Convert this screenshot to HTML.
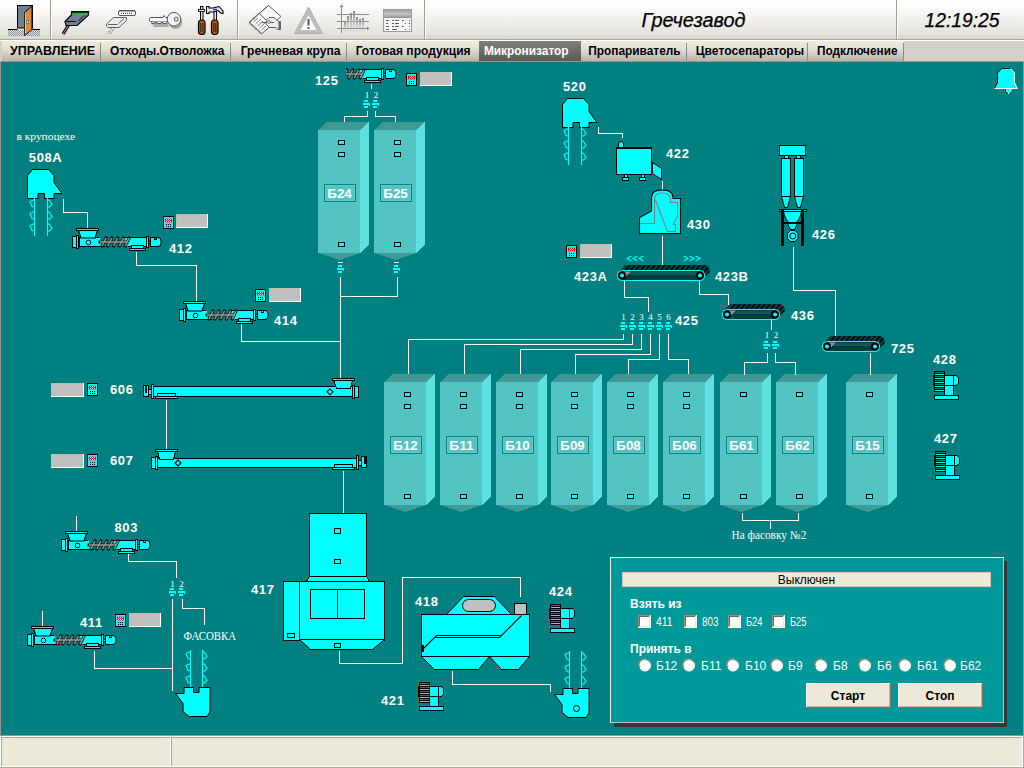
<!DOCTYPE html>
<html><head><meta charset="utf-8"><style>
html,body{margin:0;padding:0;width:1024px;height:768px;overflow:hidden;background:#d4d0c8;font-family:"Liberation Sans",sans-serif;}
#tb{position:absolute;left:0;top:0;width:1024px;height:39px;background:linear-gradient(#fdfdfc,#ffffff 10%,#e6e3dc 85%,#d9d5cc);}
.sep{position:absolute;top:0;width:1px;height:39px;background:#a09e8c;border-right:1px solid #fff;}
#tbline{position:absolute;left:0;top:39px;width:1024px;height:1px;background:#aaa896;}
#tbw{position:absolute;left:0;top:40px;width:1024px;height:1px;background:#fff;}
#tabs{position:absolute;left:0;top:41px;width:1024px;height:21px;background:#d4d0c8;}
.tab{position:absolute;top:0;height:20px;background:linear-gradient(#f0ecde,#e2dfd4 40%,#b6b4aa);font-weight:bold;font-size:12px;line-height:20px;text-align:center;color:#000;box-sizing:border-box;white-space:nowrap;}
.tab.act{background:linear-gradient(#82807a,#6e6c66 50%,#5c5a54);color:#fff;}
#status{position:absolute;left:0;top:735px;width:1024px;height:33px;background:#ece9d8;border-top:1px solid #fff;box-sizing:border-box;}
</style></head><body>
<div id="tb"></div><div class="sep" style="left:50px"></div><div class="sep" style="left:237px"></div><div class="sep" style="left:424px"></div><div class="sep" style="left:896px"></div><div id="tbline"></div><div id="tbw"></div><div id="tabs"><div class="tab" style="left:2px;width:99px"></div><div class="tab" style="left:101px;width:130px"></div><div class="tab" style="left:231px;width:116px"></div><div class="tab" style="left:347px;width:132px"></div><div class="tab act" style="left:479px;width:102px"></div><div class="tab" style="left:581px;width:106px"></div><div class="tab" style="left:687px;width:121px"></div><div class="tab" style="left:808px;width:96px"></div></div><svg width="1024" height="768" style="position:absolute;left:0;top:0" shape-rendering="crispEdges"><rect x="0" y="62" width="1024" height="673" fill="#008080" /><rect x="0" y="61" width="1024" height="1" fill="#9c948c" /><rect x="0" y="62" width="1" height="673" fill="#9c948c" /><rect x="1023" y="62" width="1" height="673" fill="#9c948c" /><text x="16.5" y="140.3" font-family="Liberation Serif" font-size="11" font-weight="normal" fill="#fff" text-anchor="start" textLength="58.5" lengthAdjust="spacingAndGlyphs">в крупоцехе</text><text x="28.8" y="162" font-family="Liberation Sans" font-size="13" font-weight="bold" fill="#fff" text-anchor="start" letter-spacing="0.6">508A</text><polygon points="32.5,169.5 48.5,169.5 54.0,175.5 54.0,182.5 62.0,193.5 54.0,193.5 54.0,198.5 44.5,198.5 44.5,193.5 38.0,193.5 38.0,198.5 27.5,198.5 27.5,175.5" fill="#00ffff" stroke="#000" stroke-width="1" shape-rendering="auto"/><path d="M34.5 198V236M47.5 198V236M34.5 199.5L30 201.5L32 206.5L34.5 207.0M47.5 199.5L49.5 200.5L52 204.5L49.5 207.0L47.5 207.0M34.5 211.5L30 213.5L32 218.5L34.5 219.0M47.5 211.5L49.5 212.5L52 216.5L49.5 219.0L47.5 219.0M34.5 223.5L30 225.5L32 230.5L34.5 231.0M47.5 223.5L49.5 224.5L52 228.5L49.5 231.0L47.5 231.0" fill="none" stroke="#00ffff" stroke-width="1.1" shape-rendering="auto"/><polyline points="63.5,198.5 63.5,212.5 87.5,212.5 87.5,228.5" fill="none" stroke="#fff" stroke-width="1"/><rect x="79.5" y="237.5" width="68" height="9" fill="#00ffff" stroke="#000" /><polygon points="99,237 122,237 128,247 105,247" fill="#008080" /><path d="M100 242H127M102.0 246L106.0 238M107.8 246L111.8 238M113.6 246L117.6 238M119.4 246L123.4 238M125.2 246L129.2 238" fill="none" stroke="#181818" stroke-width="3" stroke-linecap="square" shape-rendering="auto"/><path d="M100 242H127M102.0 246L106.0 238M107.8 246L111.8 238M113.6 246L117.6 238M119.4 246L123.4 238M125.2 246L129.2 238" fill="none" stroke="#9a9a9a" stroke-width="1.4" shape-rendering="auto"/><rect x="72.5" y="236.5" width="4" height="11" fill="#00ffff" stroke="#000" /><rect x="76.5" y="235.5" width="2" height="13" fill="#00ffff" stroke="#000" /><path d="M78.5 230.5H97.5L95 238H81Z" fill="#00ffff" stroke="#000" stroke-width="1.15" shape-rendering="auto"/><rect x="76.5" y="228.5" width="22" height="2" fill="#00ffff" stroke="#000" /><circle cx="88.5" cy="242.5" r="2.3" fill="none" stroke="#000" shape-rendering="auto"/><rect x="146.5" y="236.5" width="2" height="11" fill="#00ffff" stroke="#000" /><rect x="148.5" y="241.5" width="2" height="2" fill="#00ffff" stroke="#000" /><path d="M150.5 237.5H158Q161 237.5 161 241V243Q161 246.5 158 246.5H150.5Z" fill="#00ffff" stroke="#000" shape-rendering="auto"/><rect x="154.5" y="237.5" width="2" height="2" fill="#00ffff" stroke="#000" /><rect x="131.5" y="245.5" width="12" height="3" fill="#00ffff" stroke="#000" /><rect x="129.5" y="248.5" width="16" height="2" fill="#00ffff" stroke="#000" /><rect x="163.5" y="216.5" width="10" height="12" fill="#00ffff" stroke="#000" /><rect x="165" y="218" width="7" height="5" fill="#a09898" /><rect x="165" y="219" width="7" height="3" fill="#ff0000" /><path d="M166 219h1v1h-1zM168 219h1v1h-1zM170 219h1v1h-1zM167 220h1v1h-1zM169 220h1v1h-1zM166 221h1v1h-1zM168 221h1v1h-1zM170 221h1v1h-1z" fill="#e8c8c8"/><path d="M166 224h1v1h-1zM166 226h1v1h-1zM168 224h1v1h-1zM168 226h1v1h-1zM170 224h1v1h-1zM170 226h1v1h-1z" fill="#000"/><rect x="176" y="214" width="32" height="14" fill="#ffffff" /><rect x="176" y="214" width="31" height="13" fill="#c8b8a8" /><rect x="177" y="215" width="30" height="12" fill="#c0c0c0" /><text x="169" y="253" font-family="Liberation Sans" font-size="13" font-weight="bold" fill="#fff" text-anchor="start" letter-spacing="0.6">412</text><polyline points="136.5,251.5 136.5,265.5 196.5,265.5 196.5,301.5" fill="none" stroke="#fff" stroke-width="1"/><rect x="186.5" y="310.5" width="68" height="9" fill="#00ffff" stroke="#000" /><polygon points="206,310 229,310 235,320 212,320" fill="#008080" /><path d="M207 315H234M209.0 319L213.0 311M214.8 319L218.8 311M220.6 319L224.6 311M226.4 319L230.4 311M232.2 319L236.2 311" fill="none" stroke="#181818" stroke-width="3" stroke-linecap="square" shape-rendering="auto"/><path d="M207 315H234M209.0 319L213.0 311M214.8 319L218.8 311M220.6 319L224.6 311M226.4 319L230.4 311M232.2 319L236.2 311" fill="none" stroke="#9a9a9a" stroke-width="1.4" shape-rendering="auto"/><rect x="179.5" y="309.5" width="4" height="11" fill="#00ffff" stroke="#000" /><rect x="183.5" y="308.5" width="2" height="13" fill="#00ffff" stroke="#000" /><path d="M185.5 303.5H204.5L202 311H188Z" fill="#00ffff" stroke="#000" stroke-width="1.15" shape-rendering="auto"/><rect x="183.5" y="301.5" width="22" height="2" fill="#00ffff" stroke="#000" /><circle cx="195.5" cy="315.5" r="2.3" fill="none" stroke="#000" shape-rendering="auto"/><rect x="253.5" y="309.5" width="2" height="11" fill="#00ffff" stroke="#000" /><rect x="255.5" y="314.5" width="2" height="2" fill="#00ffff" stroke="#000" /><path d="M257.5 310.5H265Q268 310.5 268 314V316Q268 319.5 265 319.5H257.5Z" fill="#00ffff" stroke="#000" shape-rendering="auto"/><rect x="261.5" y="310.5" width="2" height="2" fill="#00ffff" stroke="#000" /><rect x="238.5" y="318.5" width="12" height="3" fill="#00ffff" stroke="#000" /><rect x="236.5" y="321.5" width="16" height="2" fill="#00ffff" stroke="#000" /><rect x="255.5" y="289.5" width="10" height="12" fill="#00ffff" stroke="#000" /><rect x="257" y="291" width="7" height="5" fill="#a09898" /><rect x="257" y="292" width="7" height="3" fill="#ff0000" /><path d="M258 292h1v1h-1zM260 292h1v1h-1zM262 292h1v1h-1zM259 293h1v1h-1zM261 293h1v1h-1zM258 294h1v1h-1zM260 294h1v1h-1zM262 294h1v1h-1z" fill="#e8c8c8"/><path d="M258 297h1v1h-1zM258 299h1v1h-1zM260 297h1v1h-1zM260 299h1v1h-1zM262 297h1v1h-1zM262 299h1v1h-1z" fill="#000"/><rect x="269" y="288" width="32" height="14" fill="#ffffff" /><rect x="269" y="288" width="31" height="13" fill="#c8b8a8" /><rect x="270" y="289" width="30" height="12" fill="#c0c0c0" /><text x="274" y="325" font-family="Liberation Sans" font-size="13" font-weight="bold" fill="#fff" text-anchor="start" letter-spacing="0.6">414</text><polyline points="241.5,323.5 241.5,341.5 340.5,341.5" fill="none" stroke="#fff" stroke-width="1"/><clipPath id="c125"><rect x="346" y="60" width="60" height="30"/></clipPath><g clip-path="url(#c125)"><rect x="314.5" y="69.5" width="68" height="9" fill="#00ffff" stroke="#000" /><polygon points="334,69 357,69 363,79 340,79" fill="#008080" /><path d="M335 74H362M337.0 78L341.0 70M342.8 78L346.8 70M348.6 78L352.6 70M354.4 78L358.4 70M360.2 78L364.2 70" fill="none" stroke="#181818" stroke-width="3" stroke-linecap="square" shape-rendering="auto"/><path d="M335 74H362M337.0 78L341.0 70M342.8 78L346.8 70M348.6 78L352.6 70M354.4 78L358.4 70M360.2 78L364.2 70" fill="none" stroke="#9a9a9a" stroke-width="1.4" shape-rendering="auto"/><rect x="307.5" y="68.5" width="4" height="11" fill="#00ffff" stroke="#000" /><rect x="311.5" y="67.5" width="2" height="13" fill="#00ffff" stroke="#000" /><path d="M313.5 62.5H332.5L330 70H316Z" fill="#00ffff" stroke="#000" stroke-width="1.15" shape-rendering="auto"/><rect x="311.5" y="60.5" width="22" height="2" fill="#00ffff" stroke="#000" /><circle cx="323.5" cy="74.5" r="2.3" fill="none" stroke="#000" shape-rendering="auto"/><rect x="381.5" y="68.5" width="2" height="11" fill="#00ffff" stroke="#000" /><rect x="383.5" y="73.5" width="2" height="2" fill="#00ffff" stroke="#000" /><path d="M385.5 69.5H393Q396 69.5 396 73V75Q396 78.5 393 78.5H385.5Z" fill="#00ffff" stroke="#000" shape-rendering="auto"/><rect x="389.5" y="69.5" width="2" height="2" fill="#00ffff" stroke="#000" /><rect x="366.5" y="77.5" width="12" height="3" fill="#00ffff" stroke="#000" /><rect x="364.5" y="80.5" width="16" height="2" fill="#00ffff" stroke="#000" /></g><text x="315" y="85" font-family="Liberation Sans" font-size="13" font-weight="bold" fill="#fff" text-anchor="start" letter-spacing="0.6">125</text><rect x="406.5" y="73.5" width="10" height="12" fill="#00ffff" stroke="#000" /><rect x="408" y="75" width="7" height="5" fill="#a09898" /><rect x="408" y="76" width="7" height="3" fill="#ff0000" /><path d="M409 76h1v1h-1zM411 76h1v1h-1zM413 76h1v1h-1zM410 77h1v1h-1zM412 77h1v1h-1zM409 78h1v1h-1zM411 78h1v1h-1zM413 78h1v1h-1z" fill="#e8c8c8"/><path d="M409 81h1v1h-1zM409 83h1v1h-1zM411 81h1v1h-1zM411 83h1v1h-1zM413 81h1v1h-1zM413 83h1v1h-1z" fill="#000"/><rect x="420" y="72" width="32" height="14" fill="#ffffff" /><rect x="420" y="72" width="31" height="13" fill="#c8b8a8" /><rect x="421" y="73" width="30" height="12" fill="#c0c0c0" /><polyline points="371.5,83.5 371.5,88.5" fill="none" stroke="#fff" stroke-width="1"/><text x="367" y="98" font-family="Liberation Serif" font-size="9" font-weight="normal" fill="#fff" text-anchor="middle" >1</text><text x="376" y="98" font-family="Liberation Serif" font-size="9" font-weight="normal" fill="#fff" text-anchor="middle" >2</text><rect x="364" y="100" width="4" height="2" fill="#00ffff" /><rect x="363" y="103" width="7" height="2" fill="#00ffff" /><rect x="369" y="103" width="1" height="3" fill="#00ffff" /><rect x="364" y="106" width="4" height="2" fill="#00ffff" /><rect x="373" y="100" width="4" height="2" fill="#00ffff" /><rect x="372" y="103" width="7" height="2" fill="#00ffff" /><rect x="378" y="103" width="1" height="3" fill="#00ffff" /><rect x="373" y="106" width="4" height="2" fill="#00ffff" /><polyline points="367.5,110.5 367.5,116.5 344.5,116.5 344.5,122.5" fill="none" stroke="#fff" stroke-width="1"/><polyline points="375.5,110.5 375.5,116.5 395.5,116.5 395.5,122.5" fill="none" stroke="#fff" stroke-width="1"/><polygon points="318,130 327,122 369,122 360,130" fill="#409894" /><polygon points="360,130 369,122 369,245 360,253" fill="#5ce0e0" /><rect x="318" y="130" width="42" height="123" fill="#52c4c4" /><polygon points="318,253 360,253 339,260" fill="#3e9c98" /><rect x="324.5" y="184.5" width="31" height="17" fill="none" stroke="#0a8282" /><rect x="325.5" y="185.5" width="29" height="15" fill="none" stroke="#5ccaca" /><text x="327.3" y="198.2" font-family="Liberation Sans" font-size="13" font-weight="bold" fill="#fff" text-anchor="start" textLength="24.5" lengthAdjust="spacingAndGlyphs">Б24</text><rect x="338.5" y="140.5" width="6" height="4" fill="#00ffff" stroke="#000" /><rect x="338.5" y="152.5" width="6" height="4" fill="#00ffff" stroke="#000" /><rect x="338.5" y="242.5" width="6" height="4" fill="#00ffff" stroke="#000" /><polygon points="374,130 383,122 425,122 416,130" fill="#409894" /><polygon points="416,130 425,122 425,245 416,253" fill="#5ce0e0" /><rect x="374" y="130" width="42" height="123" fill="#52c4c4" /><polygon points="374,253 416,253 395,260" fill="#3e9c98" /><rect x="380.5" y="184.5" width="31" height="17" fill="none" stroke="#0a8282" /><rect x="381.5" y="185.5" width="29" height="15" fill="none" stroke="#5ccaca" /><text x="383.3" y="198.2" font-family="Liberation Sans" font-size="13" font-weight="bold" fill="#fff" text-anchor="start" textLength="24.5" lengthAdjust="spacingAndGlyphs">Б25</text><rect x="394.5" y="140.5" width="6" height="4" fill="#00ffff" stroke="#000" /><rect x="394.5" y="152.5" width="6" height="4" fill="#00ffff" stroke="#000" /><rect x="394.5" y="242.5" width="6" height="4" fill="#00ffff" stroke="#000" /><rect x="338" y="262" width="5" height="1" fill="#fff" /><rect x="394" y="262" width="5" height="1" fill="#fff" /><rect x="338" y="265" width="4" height="2" fill="#00ffff" /><rect x="337" y="268" width="7" height="2" fill="#00ffff" /><rect x="343" y="268" width="1" height="3" fill="#00ffff" /><rect x="338" y="271" width="4" height="2" fill="#00ffff" /><rect x="394" y="265" width="4" height="2" fill="#00ffff" /><rect x="393" y="268" width="7" height="2" fill="#00ffff" /><rect x="399" y="268" width="1" height="3" fill="#00ffff" /><rect x="394" y="271" width="4" height="2" fill="#00ffff" /><polyline points="340.5,276.5 340.5,378.5" fill="none" stroke="#fff" stroke-width="1"/><polyline points="397.5,276.5 397.5,296.5 340.5,296.5" fill="none" stroke="#fff" stroke-width="1"/><rect x="51" y="383" width="33" height="14" fill="#ffffff" /><rect x="51" y="383" width="32" height="13" fill="#c8b8a8" /><rect x="52" y="384" width="31" height="12" fill="#c0c0c0" /><rect x="87.5" y="383.5" width="10" height="12" fill="#00ffff" stroke="#000" /><rect x="89" y="385" width="7" height="5" fill="#a09898" /><rect x="89" y="386" width="7" height="3" fill="#ff0000" /><path d="M90 386h1v1h-1zM92 386h1v1h-1zM94 386h1v1h-1zM91 387h1v1h-1zM93 387h1v1h-1zM90 388h1v1h-1zM92 388h1v1h-1zM94 388h1v1h-1z" fill="#e8c8c8"/><path d="M90 391h1v1h-1zM90 393h1v1h-1zM92 391h1v1h-1zM92 393h1v1h-1zM94 391h1v1h-1zM94 393h1v1h-1z" fill="#000"/><text x="110" y="394" font-family="Liberation Sans" font-size="13" font-weight="bold" fill="#fff" text-anchor="start" letter-spacing="0.6">606</text><rect x="51" y="454" width="33" height="14" fill="#ffffff" /><rect x="51" y="454" width="32" height="13" fill="#c8b8a8" /><rect x="52" y="455" width="31" height="12" fill="#c0c0c0" /><rect x="87.5" y="454.5" width="10" height="12" fill="#00ffff" stroke="#000" /><rect x="89" y="456" width="7" height="5" fill="#a09898" /><rect x="89" y="457" width="7" height="3" fill="#ff0000" /><path d="M90 457h1v1h-1zM92 457h1v1h-1zM94 457h1v1h-1zM91 458h1v1h-1zM93 458h1v1h-1zM90 459h1v1h-1zM92 459h1v1h-1zM94 459h1v1h-1z" fill="#e8c8c8"/><path d="M90 462h1v1h-1zM90 464h1v1h-1zM92 462h1v1h-1zM92 464h1v1h-1zM94 462h1v1h-1zM94 464h1v1h-1z" fill="#000"/><text x="110" y="465" font-family="Liberation Sans" font-size="13" font-weight="bold" fill="#fff" text-anchor="start" letter-spacing="0.6">607</text><rect x="152.5" y="386.5" width="204" height="10" fill="#00ffff" stroke="#000" /><rect x="143.5" y="385.5" width="5" height="11" fill="#00ffff" stroke="#000" /><rect x="145" y="386" width="2" height="7" fill="#000" /><rect x="148.5" y="389.5" width="3" height="5" fill="#00ffff" stroke="#000" /><rect x="151.5" y="384.5" width="2" height="14" fill="#00ffff" stroke="#000" /><rect x="155.5" y="396.5" width="22" height="2" fill="#00ffff" stroke="#000" /><rect x="157.5" y="393.5" width="18" height="3" fill="#00ffff" stroke="#000" /><polygon points="333.5,380 352.5,380 350.5,388.5 336.5,388.5" fill="#00ffff" stroke="#000" stroke-width="1" /><rect x="332.5" y="378.5" width="22" height="2" fill="#00ffff" stroke="#000" /><rect x="354.5" y="386.5" width="4" height="11" fill="#00ffff" stroke="#000" /><rect x="352.5" y="385.5" width="2" height="13" fill="#00ffff" stroke="#000" /><path d="M330 388.8L333 391.8L330 394.8L327 391.8Z" fill="none" stroke="#000" stroke-width="1.1" shape-rendering="auto"/><polyline points="166.5,399.5 166.5,450.5" fill="none" stroke="#fff" stroke-width="1"/><rect x="156.5" y="458.5" width="200" height="9" fill="#00ffff" stroke="#000" /><rect x="151.5" y="457.5" width="4" height="11" fill="#00ffff" stroke="#000" /><rect x="155.5" y="456.5" width="2" height="13" fill="#00ffff" stroke="#000" /><polygon points="157.5,451.5 175.5,451.5 173.5,459.5 159.5,459.5" fill="#00ffff" stroke="#000" stroke-width="1" /><rect x="155.5" y="449.5" width="22" height="2" fill="#00ffff" stroke="#000" /><path d="M178 460L181 463L178 466L175 463Z" fill="none" stroke="#000" stroke-width="1.1" shape-rendering="auto"/><rect x="332.5" y="467.5" width="22" height="2" fill="#00ffff" stroke="#000" /><rect x="334.5" y="464.5" width="18" height="3" fill="#00ffff" stroke="#000" /><rect x="356.5" y="455.5" width="2" height="14" fill="#00ffff" stroke="#000" /><rect x="358.5" y="460.5" width="3" height="5" fill="#00ffff" stroke="#000" /><rect x="361.5" y="456.5" width="5" height="11" fill="#00ffff" stroke="#000" /><rect x="364" y="457" width="2" height="7" fill="#000" /><polyline points="343.5,470.5 343.5,513.5" fill="none" stroke="#fff" stroke-width="1"/><rect x="309.5" y="513.5" width="57" height="63" fill="#00ffff" stroke="#000" /><rect x="334.5" y="528.5" width="6" height="5" fill="#00ffff" stroke="#000" /><rect x="334.5" y="559.5" width="6" height="4" fill="#00ffff" stroke="#000" /><polygon points="309.5,576.5 366.5,576.5 369.5,581.5 306.5,581.5" fill="#00ffff" stroke="#000" stroke-width="1" /><rect x="283.5" y="581.5" width="101" height="59" fill="#00ffff" stroke="#000" /><rect x="283.5" y="581.5" width="16" height="59" fill="#00ffff" stroke="#000" /><rect x="287.5" y="633.5" width="7" height="4" fill="#00ffff" stroke="#000" /><rect x="310.5" y="589.5" width="54" height="29" fill="#00ffff" stroke="#000" /><rect x="337" y="589" width="1" height="30" fill="#000" /><polygon points="299.5,639.5 384.5,639.5 372.5,649.5 310.5,649.5" fill="#00ffff" stroke="#000" stroke-width="1" shape-rendering="auto"/><rect x="334.5" y="643.5" width="6" height="4" fill="#00ffff" stroke="#000" /><text x="251" y="594" font-family="Liberation Sans" font-size="13" font-weight="bold" fill="#fff" text-anchor="start" letter-spacing="0.6">417</text><polyline points="339.5,650.5 339.5,663.5 402.5,663.5 402.5,577.5 520.5,577.5 520.5,596.5" fill="none" stroke="#fff" stroke-width="1"/><polygon points="446.5,614.5 463.5,596.5 494.5,596.5 511.5,614.5" fill="#00ffff" stroke="#000" stroke-width="1" shape-rendering="auto"/><rect x="462.5" y="599.5" width="33" height="12" rx="6" fill="#c0c0c0" stroke="#000" shape-rendering="auto"/><rect x="421.5" y="614.5" width="108" height="42" fill="#00ffff" stroke="#000" /><rect x="514.5" y="603.5" width="12" height="11" fill="#c0c0c0" stroke="#000" /><path d="M521.5 615.5L499.5 637.5H435.5M500.5 635.5H436.5L421.5 650.5" fill="none" stroke="#000" stroke-width="1.1" shape-rendering="auto"/><rect x="421" y="645" width="3" height="7" fill="#000" /><polygon points="421.5,656.5 489.5,656.5 478.5,669.5 434.5,669.5" fill="#00ffff" stroke="#000" stroke-width="1" shape-rendering="auto"/><polygon points="489.5,656.5 529.5,656.5 518.5,669.5 501.5,669.5" fill="#00ffff" stroke="#000" stroke-width="1" shape-rendering="auto"/><text x="415" y="606" font-family="Liberation Sans" font-size="13" font-weight="bold" fill="#fff" text-anchor="start" letter-spacing="0.6">418</text><polyline points="452.5,670.5 452.5,684.5 550.5,684.5 550.5,691.5" fill="none" stroke="#fff" stroke-width="1"/><rect x="550.5" y="628.5" width="24" height="4" fill="#00ffff" stroke="#000" /><rect x="560.5" y="618.5" width="9" height="10" fill="#00ffff" stroke="#000" /><path d="M569.5 608.5H572L574.5 610.5V616.5L572 618.5H569.5Z" fill="#00ffff" stroke="#000" shape-rendering="auto"/><rect x="560.5" y="608.5" width="9" height="10" fill="#00ffff" stroke="#000" /><rect x="550" y="604" width="11" height="21" fill="#000" /><rect x="549" y="608" width="1" height="11" fill="#000" /><rect x="551" y="605" width="9" height="1" fill="#008080" /><rect x="551" y="607" width="9" height="1" fill="#00ffff" /><rect x="551" y="609" width="9" height="1" fill="#008080" /><rect x="551" y="611" width="9" height="1" fill="#00ffff" /><rect x="551" y="613" width="9" height="1" fill="#008080" /><rect x="551" y="615" width="9" height="1" fill="#00ffff" /><rect x="551" y="617" width="9" height="1" fill="#008080" /><rect x="551" y="619" width="9" height="1" fill="#00ffff" /><rect x="551" y="621" width="9" height="1" fill="#008080" /><rect x="551" y="623" width="9" height="1" fill="#00ffff" /><text x="549" y="596" font-family="Liberation Sans" font-size="13" font-weight="bold" fill="#fff" text-anchor="start" letter-spacing="0.6">424</text><rect x="419.5" y="706.5" width="24" height="4" fill="#00ffff" stroke="#000" /><rect x="429.5" y="696.5" width="9" height="10" fill="#00ffff" stroke="#000" /><path d="M438.5 686.5H441L443.5 688.5V694.5L441 696.5H438.5Z" fill="#00ffff" stroke="#000" shape-rendering="auto"/><rect x="429.5" y="686.5" width="9" height="10" fill="#00ffff" stroke="#000" /><rect x="419" y="682" width="11" height="21" fill="#000" /><rect x="418" y="686" width="1" height="11" fill="#000" /><rect x="420" y="683" width="9" height="1" fill="#008080" /><rect x="420" y="685" width="9" height="1" fill="#00ffff" /><rect x="420" y="687" width="9" height="1" fill="#008080" /><rect x="420" y="689" width="9" height="1" fill="#00ffff" /><rect x="420" y="691" width="9" height="1" fill="#008080" /><rect x="420" y="693" width="9" height="1" fill="#00ffff" /><rect x="420" y="695" width="9" height="1" fill="#008080" /><rect x="420" y="697" width="9" height="1" fill="#00ffff" /><rect x="420" y="699" width="9" height="1" fill="#008080" /><rect x="420" y="701" width="9" height="1" fill="#00ffff" /><text x="381" y="705" font-family="Liberation Sans" font-size="13" font-weight="bold" fill="#fff" text-anchor="start" letter-spacing="0.6">421</text><path d="M569.5 651V689M581.5 651V689M569.5 652.5L565 654.5L567 659.5L569.5 660.0M581.5 652.5L583.5 653.5L586 657.5L583.5 660.0L581.5 660.0M569.5 664.5L565 666.5L567 671.5L569.5 672.0M581.5 664.5L583.5 665.5L586 669.5L583.5 672.0L581.5 672.0M569.5 676.5L565 678.5L567 683.5L569.5 684.0M581.5 676.5L583.5 677.5L586 681.5L583.5 684.0L581.5 684.0" fill="none" stroke="#00ffff" stroke-width="1.1" shape-rendering="auto"/><polygon points="554.5,694.5 563.0,694.5 563.0,688.5 572.5,688.5 572.5,693.5 578.0,693.5 578.0,688.5 589.0,688.5 589.0,713.0 586.0,717.5 568.0,717.5 562.0,712.5 562.0,704.5 554.5,694.5" fill="#00ffff" stroke="#000" stroke-width="1" shape-rendering="auto"/><circle cx="576.5" cy="708.5" r="3" fill="none" stroke="#000" shape-rendering="auto"/><polyline points="76.5,515.5 76.5,531.5" fill="none" stroke="#fff" stroke-width="1"/><rect x="68.5" y="540.5" width="68" height="9" fill="#00ffff" stroke="#000" /><polygon points="88,540 111,540 117,550 94,550" fill="#008080" /><path d="M89 545H116M91.0 549L95.0 541M96.8 549L100.8 541M102.6 549L106.6 541M108.4 549L112.4 541M114.2 549L118.2 541" fill="none" stroke="#181818" stroke-width="3" stroke-linecap="square" shape-rendering="auto"/><path d="M89 545H116M91.0 549L95.0 541M96.8 549L100.8 541M102.6 549L106.6 541M108.4 549L112.4 541M114.2 549L118.2 541" fill="none" stroke="#9a9a9a" stroke-width="1.4" shape-rendering="auto"/><rect x="61.5" y="539.5" width="4" height="11" fill="#00ffff" stroke="#000" /><rect x="65.5" y="538.5" width="2" height="13" fill="#00ffff" stroke="#000" /><path d="M67.5 533.5H86.5L84 541H70Z" fill="#00ffff" stroke="#000" stroke-width="1.15" shape-rendering="auto"/><rect x="65.5" y="531.5" width="22" height="2" fill="#00ffff" stroke="#000" /><circle cx="77.5" cy="545.5" r="2.3" fill="none" stroke="#000" shape-rendering="auto"/><rect x="135.5" y="539.5" width="2" height="11" fill="#00ffff" stroke="#000" /><rect x="137.5" y="544.5" width="2" height="2" fill="#00ffff" stroke="#000" /><path d="M139.5 540.5H147Q150 540.5 150 544V546Q150 549.5 147 549.5H139.5Z" fill="#00ffff" stroke="#000" shape-rendering="auto"/><rect x="143.5" y="540.5" width="2" height="2" fill="#00ffff" stroke="#000" /><rect x="120.5" y="548.5" width="12" height="3" fill="#00ffff" stroke="#000" /><rect x="118.5" y="551.5" width="16" height="2" fill="#00ffff" stroke="#000" /><text x="114.5" y="532" font-family="Liberation Sans" font-size="13" font-weight="bold" fill="#fff" text-anchor="start" letter-spacing="0.6">803</text><polyline points="128.5,553.5 128.5,561.5 176.5,561.5 176.5,577.5" fill="none" stroke="#fff" stroke-width="1"/><text x="172.5" y="586.5" font-family="Liberation Serif" font-size="9" font-weight="normal" fill="#fff" text-anchor="middle" >1</text><text x="181.5" y="586.5" font-family="Liberation Serif" font-size="9" font-weight="normal" fill="#fff" text-anchor="middle" >2</text><rect x="170" y="588" width="4" height="2" fill="#00ffff" /><rect x="169" y="591" width="7" height="2" fill="#00ffff" /><rect x="175" y="591" width="1" height="3" fill="#00ffff" /><rect x="170" y="594" width="4" height="2" fill="#00ffff" /><rect x="179" y="588" width="4" height="2" fill="#00ffff" /><rect x="178" y="591" width="7" height="2" fill="#00ffff" /><rect x="184" y="591" width="1" height="3" fill="#00ffff" /><rect x="179" y="594" width="4" height="2" fill="#00ffff" /><polyline points="172.5,598.5 172.5,690.5" fill="none" stroke="#fff" stroke-width="1"/><polyline points="182.5,598.5 182.5,608.5 204.5,608.5 204.5,624.5" fill="none" stroke="#fff" stroke-width="1"/><text x="183.6" y="639.5" font-family="Liberation Serif" font-size="11.6" font-weight="normal" fill="#fff" text-anchor="start" textLength="52.5" lengthAdjust="spacingAndGlyphs">ФАСОВКА</text><polyline points="42.5,610.5 42.5,626.5" fill="none" stroke="#fff" stroke-width="1"/><rect x="34.5" y="635.5" width="68" height="9" fill="#00ffff" stroke="#000" /><polygon points="54,635 77,635 83,645 60,645" fill="#008080" /><path d="M55 640H82M57.0 644L61.0 636M62.8 644L66.8 636M68.6 644L72.6 636M74.4 644L78.4 636M80.2 644L84.2 636" fill="none" stroke="#181818" stroke-width="3" stroke-linecap="square" shape-rendering="auto"/><path d="M55 640H82M57.0 644L61.0 636M62.8 644L66.8 636M68.6 644L72.6 636M74.4 644L78.4 636M80.2 644L84.2 636" fill="none" stroke="#9a9a9a" stroke-width="1.4" shape-rendering="auto"/><rect x="27.5" y="634.5" width="4" height="11" fill="#00ffff" stroke="#000" /><rect x="31.5" y="633.5" width="2" height="13" fill="#00ffff" stroke="#000" /><path d="M33.5 628.5H52.5L50 636H36Z" fill="#00ffff" stroke="#000" stroke-width="1.15" shape-rendering="auto"/><rect x="31.5" y="626.5" width="22" height="2" fill="#00ffff" stroke="#000" /><circle cx="43.5" cy="640.5" r="2.3" fill="none" stroke="#000" shape-rendering="auto"/><rect x="101.5" y="634.5" width="2" height="11" fill="#00ffff" stroke="#000" /><rect x="103.5" y="639.5" width="2" height="2" fill="#00ffff" stroke="#000" /><path d="M105.5 635.5H113Q116 635.5 116 639V641Q116 644.5 113 644.5H105.5Z" fill="#00ffff" stroke="#000" shape-rendering="auto"/><rect x="109.5" y="635.5" width="2" height="2" fill="#00ffff" stroke="#000" /><rect x="86.5" y="643.5" width="12" height="3" fill="#00ffff" stroke="#000" /><rect x="84.5" y="646.5" width="16" height="2" fill="#00ffff" stroke="#000" /><text x="80" y="627" font-family="Liberation Sans" font-size="13" font-weight="bold" fill="#fff" text-anchor="start" letter-spacing="0.6">411</text><rect x="115.5" y="614.5" width="10" height="12" fill="#00ffff" stroke="#000" /><rect x="117" y="616" width="7" height="5" fill="#a09898" /><rect x="117" y="617" width="7" height="3" fill="#ff0000" /><path d="M118 617h1v1h-1zM120 617h1v1h-1zM122 617h1v1h-1zM119 618h1v1h-1zM121 618h1v1h-1zM118 619h1v1h-1zM120 619h1v1h-1zM122 619h1v1h-1z" fill="#e8c8c8"/><path d="M118 622h1v1h-1zM118 624h1v1h-1zM120 622h1v1h-1zM120 624h1v1h-1zM122 622h1v1h-1zM122 624h1v1h-1z" fill="#000"/><rect x="129" y="613" width="32" height="14" fill="#ffffff" /><rect x="129" y="613" width="31" height="13" fill="#c8b8a8" /><rect x="130" y="614" width="30" height="12" fill="#c0c0c0" /><polyline points="94.5,650.5 94.5,668.5 172.5,668.5" fill="none" stroke="#fff" stroke-width="1"/><path d="M190.5 650V688M202.5 650V688M190.5 651.5L186 653.5L188 658.5L190.5 659.0M202.5 651.5L204.5 652.5L207 656.5L204.5 659.0L202.5 659.0M190.5 663.5L186 665.5L188 670.5L190.5 671.0M202.5 663.5L204.5 664.5L207 668.5L204.5 671.0L202.5 671.0M190.5 675.5L186 677.5L188 682.5L190.5 683.0M202.5 675.5L204.5 676.5L207 680.5L204.5 683.0L202.5 683.0" fill="none" stroke="#00ffff" stroke-width="1.1" shape-rendering="auto"/><polygon points="175.5,693.5 184.0,693.5 184.0,687.5 193.5,687.5 193.5,692.5 199.0,692.5 199.0,687.5 210.0,687.5 210.0,712.0 207.0,716.5 189.0,716.5 183.0,711.5 183.0,703.5 175.5,693.5" fill="#00ffff" stroke="#000" stroke-width="1" shape-rendering="auto"/><text x="563" y="91" font-family="Liberation Sans" font-size="13" font-weight="bold" fill="#fff" text-anchor="start" letter-spacing="0.6">520</text><polygon points="567.5,98.5 583.5,98.5 589.0,104.5 589.0,111.5 597.0,122.5 589.0,122.5 589.0,127.5 579.5,127.5 579.5,122.5 573.0,122.5 573.0,127.5 562.5,127.5 562.5,104.5" fill="#00ffff" stroke="#000" stroke-width="1" shape-rendering="auto"/><path d="M568.5 127V165M581.5 127V165M568.5 128.5L564 130.5L566 135.5L568.5 136.0M581.5 128.5L583.5 129.5L586 133.5L583.5 136.0L581.5 136.0M568.5 140.5L564 142.5L566 147.5L568.5 148.0M581.5 140.5L583.5 141.5L586 145.5L583.5 148.0L581.5 148.0M568.5 152.5L564 154.5L566 159.5L568.5 160.0M581.5 152.5L583.5 153.5L586 157.5L583.5 160.0L581.5 160.0" fill="none" stroke="#00ffff" stroke-width="1.1" shape-rendering="auto"/><polyline points="598.5,126.5 598.5,133.5 622.5,133.5 622.5,137.5" fill="none" stroke="#fff" stroke-width="1"/><rect x="616.5" y="147.5" width="35" height="27" fill="#00ffff" stroke="#000" /><rect x="616" y="147" width="36" height="2" fill="#000" /><path d="M618.5 147V144Q618.5 141.5 621 141.5Q623.5 141.5 623.5 144V147" fill="#00ffff" stroke="#000" shape-rendering="auto"/><rect x="624.5" y="174.5" width="3" height="3" fill="#00ffff" stroke="#000" /><rect x="622.5" y="177.5" width="6" height="3" fill="#00ffff" stroke="#000" /><rect x="641.5" y="174.5" width="3" height="3" fill="#00ffff" stroke="#000" /><rect x="639.5" y="177.5" width="6" height="3" fill="#00ffff" stroke="#000" /><polygon points="652.5,162.5 661.5,168.5 661.5,179.5 652.5,173.5" fill="#00ffff" stroke="#000" stroke-width="1" shape-rendering="auto"/><text x="666" y="158" font-family="Liberation Sans" font-size="13" font-weight="bold" fill="#fff" text-anchor="start" letter-spacing="0.6">422</text><polyline points="662.5,180.5 662.5,189.5" fill="none" stroke="#fff" stroke-width="1"/><path d="M639.5 233.5V217.5L651.5 211V197.5Q651.5 190 662 190Q673 190 673 197.5V198.5H680.5V233.5Z" fill="#00ffff" stroke="#000" stroke-width="1.1" shape-rendering="auto"/><path d="M640 223.5H654.5V199.5Q654.5 193 662 193Q670.5 193 670.5 199.5V202.5H677.5V216L673.5 224.5H675.5V231.5H667.5L655 199" fill="none" stroke="#808080" stroke-width="1.1" shape-rendering="auto"/><text x="687" y="229" font-family="Liberation Sans" font-size="13" font-weight="bold" fill="#fff" text-anchor="start" letter-spacing="0.6">430</text><polyline points="662.5,235.5 662.5,265.5" fill="none" stroke="#fff" stroke-width="1"/><rect x="566.5" y="245.5" width="10" height="12" fill="#00ffff" stroke="#000" /><rect x="568" y="247" width="7" height="5" fill="#a09898" /><rect x="568" y="248" width="7" height="3" fill="#ff0000" /><path d="M569 248h1v1h-1zM571 248h1v1h-1zM573 248h1v1h-1zM570 249h1v1h-1zM572 249h1v1h-1zM569 250h1v1h-1zM571 250h1v1h-1zM573 250h1v1h-1z" fill="#e8c8c8"/><path d="M569 253h1v1h-1zM569 255h1v1h-1zM571 253h1v1h-1zM571 255h1v1h-1zM573 253h1v1h-1zM573 255h1v1h-1z" fill="#000"/><rect x="580" y="244" width="32" height="14" fill="#ffffff" /><rect x="580" y="244" width="31" height="13" fill="#c8b8a8" /><rect x="581" y="245" width="30" height="12" fill="#c0c0c0" /><path d="M631.5 256L627 258.5L631.5 261M637.5 256L633 258.5L637.5 261M643.5 256L639 258.5L643.5 261M683.5 256L688 258.5L683.5 261M689.5 256L694 258.5L689.5 261M695.5 256L700 258.5L695.5 261" fill="none" stroke="#00ffff" stroke-width="1.1" shape-rendering="auto"/><clipPath id="bc617"><polygon points="619.5,271 625,265 706,265 709.5,268.5 709.5,272.5 704,277 704,271"/></clipPath><polygon points="619.5,271 625,265 706,265 709.5,268.5 709.5,272.5 704,277 704,271" fill="#083c3c" shape-rendering="auto"/><path d="M619 278L631 264M624 278L636 264M629 278L641 264M634 278L646 264M639 278L651 264M644 278L656 264M649 278L661 264M654 278L666 264M659 278L671 264M664 278L676 264M669 278L681 264M674 278L686 264M679 278L691 264M684 278L696 264M689 278L701 264M694 278L706 264M699 278L711 264M704 278L716 264M709 278L721 264M714 278L726 264" stroke="#000" stroke-width="1.3" fill="none" shape-rendering="auto" clip-path="url(#bc617)"/><rect x="617.5" y="270.5" width="87" height="10" rx="5" fill="#003c3c" stroke="#00ffff" stroke-width="1.1" shape-rendering="auto"/><rect x="622" y="272" width="78" height="3" fill="#0a5858" /><polygon points="624,271.5 631,271.5 625,277" fill="#a09090" shape-rendering="auto"/><circle cx="622" cy="275.5" r="4" fill="#000" shape-rendering="auto"/><circle cx="622" cy="275.5" r="2" fill="#00ffff" shape-rendering="auto"/><circle cx="700" cy="275.5" r="4" fill="#000" shape-rendering="auto"/><circle cx="700" cy="275.5" r="2" fill="#00ffff" shape-rendering="auto"/><text x="574" y="281" font-family="Liberation Sans" font-size="13" font-weight="bold" fill="#fff" text-anchor="start" letter-spacing="0.6">423A</text><text x="715" y="281" font-family="Liberation Sans" font-size="13" font-weight="bold" fill="#fff" text-anchor="start" letter-spacing="0.6">423B</text><polyline points="624.5,280.5 624.5,297.5 648.5,297.5 648.5,311.5" fill="none" stroke="#fff" stroke-width="1"/><polyline points="699.5,280.5 699.5,294.5 728.5,294.5 728.5,304.5" fill="none" stroke="#fff" stroke-width="1"/><text x="623.5" y="320" font-family="Liberation Serif" font-size="9" font-weight="normal" fill="#fff" text-anchor="middle" >1</text><rect x="621" y="322" width="4" height="2" fill="#00ffff" /><rect x="620" y="325" width="7" height="2" fill="#00ffff" /><rect x="626" y="325" width="1" height="3" fill="#00ffff" /><rect x="621" y="328" width="4" height="2" fill="#00ffff" /><text x="632.5" y="320" font-family="Liberation Serif" font-size="9" font-weight="normal" fill="#fff" text-anchor="middle" >2</text><rect x="630" y="322" width="4" height="2" fill="#00ffff" /><rect x="629" y="325" width="7" height="2" fill="#00ffff" /><rect x="635" y="325" width="1" height="3" fill="#00ffff" /><rect x="630" y="328" width="4" height="2" fill="#00ffff" /><text x="641.5" y="320" font-family="Liberation Serif" font-size="9" font-weight="normal" fill="#fff" text-anchor="middle" >3</text><rect x="639" y="322" width="4" height="2" fill="#00ffff" /><rect x="638" y="325" width="7" height="2" fill="#00ffff" /><rect x="644" y="325" width="1" height="3" fill="#00ffff" /><rect x="639" y="328" width="4" height="2" fill="#00ffff" /><text x="650.5" y="320" font-family="Liberation Serif" font-size="9" font-weight="normal" fill="#fff" text-anchor="middle" >4</text><rect x="648" y="322" width="4" height="2" fill="#00ffff" /><rect x="647" y="325" width="7" height="2" fill="#00ffff" /><rect x="653" y="325" width="1" height="3" fill="#00ffff" /><rect x="648" y="328" width="4" height="2" fill="#00ffff" /><text x="659.5" y="320" font-family="Liberation Serif" font-size="9" font-weight="normal" fill="#fff" text-anchor="middle" >5</text><rect x="657" y="322" width="4" height="2" fill="#00ffff" /><rect x="656" y="325" width="7" height="2" fill="#00ffff" /><rect x="662" y="325" width="1" height="3" fill="#00ffff" /><rect x="657" y="328" width="4" height="2" fill="#00ffff" /><text x="668.5" y="320" font-family="Liberation Serif" font-size="9" font-weight="normal" fill="#fff" text-anchor="middle" >6</text><rect x="666" y="322" width="4" height="2" fill="#00ffff" /><rect x="665" y="325" width="7" height="2" fill="#00ffff" /><rect x="671" y="325" width="1" height="3" fill="#00ffff" /><rect x="666" y="328" width="4" height="2" fill="#00ffff" /><text x="675" y="325" font-family="Liberation Sans" font-size="13" font-weight="bold" fill="#fff" text-anchor="start" letter-spacing="0.6">425</text><polyline points="623.5,333.5 623.5,339.5 408.5,339.5 408.5,374.5" fill="none" stroke="#fff" stroke-width="1"/><polyline points="632.5,333.5 632.5,344.5 464.5,344.5 464.5,374.5" fill="none" stroke="#fff" stroke-width="1"/><polyline points="641.5,333.5 641.5,349.5 520.5,349.5 520.5,374.5" fill="none" stroke="#fff" stroke-width="1"/><polyline points="650.5,333.5 650.5,354.5 575.5,354.5 575.5,374.5" fill="none" stroke="#fff" stroke-width="1"/><polyline points="659.5,333.5 659.5,359.5 628.5,359.5 628.5,374.5" fill="none" stroke="#fff" stroke-width="1"/><polyline points="668.5,333.5 668.5,359.5 688.5,359.5 688.5,374.5" fill="none" stroke="#fff" stroke-width="1"/><polygon points="384,382 393,374 435,374 426,382" fill="#409894" /><polygon points="426,382 435,374 435,497 426,505" fill="#5ce0e0" /><rect x="384" y="382" width="42" height="123" fill="#52c4c4" /><polygon points="384,505 426,505 405,512" fill="#3e9c98" /><rect x="390.5" y="436.5" width="31" height="17" fill="none" stroke="#0a8282" /><rect x="391.5" y="437.5" width="29" height="15" fill="none" stroke="#5ccaca" /><text x="393.3" y="450.2" font-family="Liberation Sans" font-size="13" font-weight="bold" fill="#fff" text-anchor="start" textLength="24.5" lengthAdjust="spacingAndGlyphs">Б12</text><rect x="404.5" y="392.5" width="6" height="4" fill="#00ffff" stroke="#000" /><rect x="404.5" y="404.5" width="6" height="4" fill="#00ffff" stroke="#000" /><rect x="404.5" y="494.5" width="6" height="4" fill="#00ffff" stroke="#000" /><polygon points="440,382 449,374 491,374 482,382" fill="#409894" /><polygon points="482,382 491,374 491,497 482,505" fill="#5ce0e0" /><rect x="440" y="382" width="42" height="123" fill="#52c4c4" /><polygon points="440,505 482,505 461,512" fill="#3e9c98" /><rect x="446.5" y="436.5" width="31" height="17" fill="none" stroke="#0a8282" /><rect x="447.5" y="437.5" width="29" height="15" fill="none" stroke="#5ccaca" /><text x="449.3" y="450.2" font-family="Liberation Sans" font-size="13" font-weight="bold" fill="#fff" text-anchor="start" textLength="24.5" lengthAdjust="spacingAndGlyphs">Б11</text><rect x="460.5" y="392.5" width="6" height="4" fill="#00ffff" stroke="#000" /><rect x="460.5" y="404.5" width="6" height="4" fill="#00ffff" stroke="#000" /><rect x="460.5" y="494.5" width="6" height="4" fill="#00ffff" stroke="#000" /><polygon points="496,382 505,374 547,374 538,382" fill="#409894" /><polygon points="538,382 547,374 547,497 538,505" fill="#5ce0e0" /><rect x="496" y="382" width="42" height="123" fill="#52c4c4" /><polygon points="496,505 538,505 517,512" fill="#3e9c98" /><rect x="502.5" y="436.5" width="31" height="17" fill="none" stroke="#0a8282" /><rect x="503.5" y="437.5" width="29" height="15" fill="none" stroke="#5ccaca" /><text x="505.3" y="450.2" font-family="Liberation Sans" font-size="13" font-weight="bold" fill="#fff" text-anchor="start" textLength="24.5" lengthAdjust="spacingAndGlyphs">Б10</text><rect x="516.5" y="392.5" width="6" height="4" fill="#00ffff" stroke="#000" /><rect x="516.5" y="404.5" width="6" height="4" fill="#00ffff" stroke="#000" /><rect x="516.5" y="494.5" width="6" height="4" fill="#00ffff" stroke="#000" /><polygon points="551,382 560,374 602,374 593,382" fill="#409894" /><polygon points="593,382 602,374 602,497 593,505" fill="#5ce0e0" /><rect x="551" y="382" width="42" height="123" fill="#52c4c4" /><polygon points="551,505 593,505 572,512" fill="#3e9c98" /><rect x="557.5" y="436.5" width="31" height="17" fill="none" stroke="#0a8282" /><rect x="558.5" y="437.5" width="29" height="15" fill="none" stroke="#5ccaca" /><text x="560.3" y="450.2" font-family="Liberation Sans" font-size="13" font-weight="bold" fill="#fff" text-anchor="start" textLength="24.5" lengthAdjust="spacingAndGlyphs">Б09</text><rect x="571.5" y="392.5" width="6" height="4" fill="#00ffff" stroke="#000" /><rect x="571.5" y="404.5" width="6" height="4" fill="#00ffff" stroke="#000" /><rect x="571.5" y="494.5" width="6" height="4" fill="#00ffff" stroke="#000" /><polygon points="607,382 616,374 658,374 649,382" fill="#409894" /><polygon points="649,382 658,374 658,497 649,505" fill="#5ce0e0" /><rect x="607" y="382" width="42" height="123" fill="#52c4c4" /><polygon points="607,505 649,505 628,512" fill="#3e9c98" /><rect x="613.5" y="436.5" width="31" height="17" fill="none" stroke="#0a8282" /><rect x="614.5" y="437.5" width="29" height="15" fill="none" stroke="#5ccaca" /><text x="616.3" y="450.2" font-family="Liberation Sans" font-size="13" font-weight="bold" fill="#fff" text-anchor="start" textLength="24.5" lengthAdjust="spacingAndGlyphs">Б08</text><rect x="627.5" y="392.5" width="6" height="4" fill="#00ffff" stroke="#000" /><rect x="627.5" y="404.5" width="6" height="4" fill="#00ffff" stroke="#000" /><rect x="627.5" y="494.5" width="6" height="4" fill="#00ffff" stroke="#000" /><polygon points="663,382 672,374 714,374 705,382" fill="#409894" /><polygon points="705,382 714,374 714,497 705,505" fill="#5ce0e0" /><rect x="663" y="382" width="42" height="123" fill="#52c4c4" /><polygon points="663,505 705,505 684,512" fill="#3e9c98" /><rect x="669.5" y="436.5" width="31" height="17" fill="none" stroke="#0a8282" /><rect x="670.5" y="437.5" width="29" height="15" fill="none" stroke="#5ccaca" /><text x="672.3" y="450.2" font-family="Liberation Sans" font-size="13" font-weight="bold" fill="#fff" text-anchor="start" textLength="24.5" lengthAdjust="spacingAndGlyphs">Б06</text><rect x="683.5" y="392.5" width="6" height="4" fill="#00ffff" stroke="#000" /><rect x="683.5" y="404.5" width="6" height="4" fill="#00ffff" stroke="#000" /><rect x="683.5" y="494.5" width="6" height="4" fill="#00ffff" stroke="#000" /><polygon points="720,382 729,374 771,374 762,382" fill="#409894" /><polygon points="762,382 771,374 771,497 762,505" fill="#5ce0e0" /><rect x="720" y="382" width="42" height="123" fill="#52c4c4" /><polygon points="720,505 762,505 741,512" fill="#3e9c98" /><rect x="726.5" y="436.5" width="31" height="17" fill="none" stroke="#0a8282" /><rect x="727.5" y="437.5" width="29" height="15" fill="none" stroke="#5ccaca" /><text x="729.3" y="450.2" font-family="Liberation Sans" font-size="13" font-weight="bold" fill="#fff" text-anchor="start" textLength="24.5" lengthAdjust="spacingAndGlyphs">Б61</text><rect x="740.5" y="392.5" width="6" height="4" fill="#00ffff" stroke="#000" /><rect x="740.5" y="494.5" width="6" height="4" fill="#00ffff" stroke="#000" /><polygon points="776,382 785,374 827,374 818,382" fill="#409894" /><polygon points="818,382 827,374 827,497 818,505" fill="#5ce0e0" /><rect x="776" y="382" width="42" height="123" fill="#52c4c4" /><polygon points="776,505 818,505 797,512" fill="#3e9c98" /><rect x="782.5" y="436.5" width="31" height="17" fill="none" stroke="#0a8282" /><rect x="783.5" y="437.5" width="29" height="15" fill="none" stroke="#5ccaca" /><text x="785.3" y="450.2" font-family="Liberation Sans" font-size="13" font-weight="bold" fill="#fff" text-anchor="start" textLength="24.5" lengthAdjust="spacingAndGlyphs">Б62</text><rect x="796.5" y="392.5" width="6" height="4" fill="#00ffff" stroke="#000" /><rect x="796.5" y="494.5" width="6" height="4" fill="#00ffff" stroke="#000" /><polygon points="846,382 855,374 897,374 888,382" fill="#409894" /><polygon points="888,382 897,374 897,497 888,505" fill="#5ce0e0" /><rect x="846" y="382" width="42" height="123" fill="#52c4c4" /><polygon points="846,505 888,505 867,512" fill="#3e9c98" /><rect x="852.5" y="436.5" width="31" height="17" fill="none" stroke="#0a8282" /><rect x="853.5" y="437.5" width="29" height="15" fill="none" stroke="#5ccaca" /><text x="855.3" y="450.2" font-family="Liberation Sans" font-size="13" font-weight="bold" fill="#fff" text-anchor="start" textLength="24.5" lengthAdjust="spacingAndGlyphs">Б15</text><rect x="866.5" y="392.5" width="6" height="4" fill="#00ffff" stroke="#000" /><rect x="866.5" y="494.5" width="6" height="4" fill="#00ffff" stroke="#000" /><clipPath id="bc722"><polygon points="724.5,310 730,304 781,304 784.5,307.5 784.5,311.5 779,316 779,310"/></clipPath><polygon points="724.5,310 730,304 781,304 784.5,307.5 784.5,311.5 779,316 779,310" fill="#083c3c" shape-rendering="auto"/><path d="M724 317L736 303M729 317L741 303M734 317L746 303M739 317L751 303M744 317L756 303M749 317L761 303M754 317L766 303M759 317L771 303M764 317L776 303M769 317L781 303M774 317L786 303M779 317L791 303M784 317L796 303M789 317L801 303" stroke="#000" stroke-width="1.3" fill="none" shape-rendering="auto" clip-path="url(#bc722)"/><rect x="722.5" y="309.5" width="57" height="10" rx="5" fill="#003c3c" stroke="#00ffff" stroke-width="1.1" shape-rendering="auto"/><rect x="727" y="311" width="48" height="3" fill="#0a5858" /><polygon points="729,310.5 736,310.5 730,316" fill="#a09090" shape-rendering="auto"/><circle cx="727" cy="314.5" r="4" fill="#000" shape-rendering="auto"/><circle cx="727" cy="314.5" r="2" fill="#00ffff" shape-rendering="auto"/><circle cx="775" cy="314.5" r="4" fill="#000" shape-rendering="auto"/><circle cx="775" cy="314.5" r="2" fill="#00ffff" shape-rendering="auto"/><text x="791" y="320" font-family="Liberation Sans" font-size="13" font-weight="bold" fill="#fff" text-anchor="start" letter-spacing="0.6">436</text><polyline points="771.5,319.5 771.5,329.5" fill="none" stroke="#fff" stroke-width="1"/><text x="767" y="338" font-family="Liberation Serif" font-size="9" font-weight="normal" fill="#fff" text-anchor="middle" >1</text><text x="776" y="338" font-family="Liberation Serif" font-size="9" font-weight="normal" fill="#fff" text-anchor="middle" >2</text><rect x="764" y="341" width="4" height="2" fill="#00ffff" /><rect x="763" y="344" width="7" height="2" fill="#00ffff" /><rect x="769" y="344" width="1" height="3" fill="#00ffff" /><rect x="764" y="347" width="4" height="2" fill="#00ffff" /><rect x="773" y="341" width="4" height="2" fill="#00ffff" /><rect x="772" y="344" width="7" height="2" fill="#00ffff" /><rect x="778" y="344" width="1" height="3" fill="#00ffff" /><rect x="773" y="347" width="4" height="2" fill="#00ffff" /><polyline points="767.5,352.5 767.5,362.5 744.5,362.5 744.5,374.5" fill="none" stroke="#fff" stroke-width="1"/><polyline points="775.5,352.5 775.5,362.5 795.5,362.5 795.5,374.5" fill="none" stroke="#fff" stroke-width="1"/><rect x="779.5" y="145.5" width="26" height="10" fill="#00ffff" stroke="#000" /><rect x="784.5" y="155.5" width="4" height="3" fill="#00ffff" stroke="#000" /><rect x="796.5" y="155.5" width="4" height="3" fill="#00ffff" stroke="#000" /><rect x="781.5" y="158.5" width="9" height="38" fill="#00ffff" stroke="#000" /><rect x="794.5" y="158.5" width="9" height="38" fill="#00ffff" stroke="#000" /><polygon points="781.5,196.5 790.5,196.5 787.5,207.5 784.5,207.5" fill="#00ffff" stroke="#000" stroke-width="1" shape-rendering="auto"/><polygon points="794.5,196.5 803.5,196.5 800.5,207.5 797.5,207.5" fill="#00ffff" stroke="#000" stroke-width="1" shape-rendering="auto"/><rect x="779.5" y="209.5" width="27" height="2" fill="#00ffff" stroke="#000" /><path d="M783.5 211.5H801.5Q800 220 795 223.5H790Q785 220 783.5 211.5Z" fill="#00ffff" stroke="#000" shape-rendering="auto"/><polygon points="787.5,223.5 797.5,223.5 794.5,229.5 790.5,229.5" fill="#00ffff" stroke="#000" stroke-width="1" shape-rendering="auto"/><rect x="781" y="209" width="3" height="37" fill="#000" /><rect x="801" y="209" width="3" height="37" fill="#000" /><rect x="783" y="222" width="19" height="2" fill="#000" /><path d="M790.5 230.5H795L798 233.5V238.5L795 241.5H790.5L787.5 238.5V233.5Z" fill="#00ffff" stroke="#000" shape-rendering="auto"/><circle cx="792.8" cy="236" r="3" fill="none" stroke="#000" shape-rendering="auto"/><text x="812" y="239" font-family="Liberation Sans" font-size="13" font-weight="bold" fill="#fff" text-anchor="start" letter-spacing="0.6">426</text><polyline points="793.5,246.5 793.5,290.5 835.5,290.5 835.5,337.5" fill="none" stroke="#fff" stroke-width="1"/><clipPath id="bc822"><polygon points="824.5,342 830,336 881,336 884.5,339.5 884.5,343.5 879,348 879,342"/></clipPath><polygon points="824.5,342 830,336 881,336 884.5,339.5 884.5,343.5 879,348 879,342" fill="#083c3c" shape-rendering="auto"/><path d="M824 349L836 335M829 349L841 335M834 349L846 335M839 349L851 335M844 349L856 335M849 349L861 335M854 349L866 335M859 349L871 335M864 349L876 335M869 349L881 335M874 349L886 335M879 349L891 335M884 349L896 335M889 349L901 335" stroke="#000" stroke-width="1.3" fill="none" shape-rendering="auto" clip-path="url(#bc822)"/><rect x="822.5" y="341.5" width="57" height="10" rx="5" fill="#003c3c" stroke="#00ffff" stroke-width="1.1" shape-rendering="auto"/><rect x="827" y="343" width="48" height="3" fill="#0a5858" /><polygon points="829,342.5 836,342.5 830,348" fill="#a09090" shape-rendering="auto"/><circle cx="827" cy="346.5" r="4" fill="#000" shape-rendering="auto"/><circle cx="827" cy="346.5" r="2" fill="#00ffff" shape-rendering="auto"/><circle cx="875" cy="346.5" r="4" fill="#000" shape-rendering="auto"/><circle cx="875" cy="346.5" r="2" fill="#00ffff" shape-rendering="auto"/><text x="891" y="353" font-family="Liberation Sans" font-size="13" font-weight="bold" fill="#fff" text-anchor="start" letter-spacing="0.6">725</text><polyline points="870.5,352.5 870.5,374.5" fill="none" stroke="#fff" stroke-width="1"/><text x="933" y="364" font-family="Liberation Sans" font-size="13" font-weight="bold" fill="#fff" text-anchor="start" letter-spacing="0.6">428</text><rect x="934.5" y="395.5" width="24" height="4" fill="#00ffff" stroke="#000" /><rect x="944.5" y="385.5" width="9" height="10" fill="#00ffff" stroke="#000" /><path d="M953.5 375.5H956L958.5 377.5V383.5L956 385.5H953.5Z" fill="#00ffff" stroke="#000" shape-rendering="auto"/><rect x="944.5" y="375.5" width="9" height="10" fill="#00ffff" stroke="#000" /><rect x="934" y="371" width="11" height="21" fill="#000" /><rect x="933" y="375" width="1" height="11" fill="#000" /><rect x="935" y="372" width="9" height="1" fill="#008080" /><rect x="935" y="374" width="9" height="1" fill="#00ffff" /><rect x="935" y="376" width="9" height="1" fill="#008080" /><rect x="935" y="378" width="9" height="1" fill="#00ffff" /><rect x="935" y="380" width="9" height="1" fill="#008080" /><rect x="935" y="382" width="9" height="1" fill="#00ffff" /><rect x="935" y="384" width="9" height="1" fill="#008080" /><rect x="935" y="386" width="9" height="1" fill="#00ffff" /><rect x="935" y="388" width="9" height="1" fill="#008080" /><rect x="935" y="390" width="9" height="1" fill="#00ffff" /><text x="934" y="443" font-family="Liberation Sans" font-size="13" font-weight="bold" fill="#fff" text-anchor="start" letter-spacing="0.6">427</text><rect x="935.5" y="475.5" width="24" height="4" fill="#00ffff" stroke="#000" /><rect x="945.5" y="465.5" width="9" height="10" fill="#00ffff" stroke="#000" /><path d="M954.5 455.5H957L959.5 457.5V463.5L957 465.5H954.5Z" fill="#00ffff" stroke="#000" shape-rendering="auto"/><rect x="945.5" y="455.5" width="9" height="10" fill="#00ffff" stroke="#000" /><rect x="935" y="451" width="11" height="21" fill="#000" /><rect x="934" y="455" width="1" height="11" fill="#000" /><rect x="936" y="452" width="9" height="1" fill="#008080" /><rect x="936" y="454" width="9" height="1" fill="#00ffff" /><rect x="936" y="456" width="9" height="1" fill="#008080" /><rect x="936" y="458" width="9" height="1" fill="#00ffff" /><rect x="936" y="460" width="9" height="1" fill="#008080" /><rect x="936" y="462" width="9" height="1" fill="#00ffff" /><rect x="936" y="464" width="9" height="1" fill="#008080" /><rect x="936" y="466" width="9" height="1" fill="#00ffff" /><rect x="936" y="468" width="9" height="1" fill="#008080" /><rect x="936" y="470" width="9" height="1" fill="#00ffff" /><polyline points="742.5,512.5 742.5,520.5 798.5,520.5 798.5,512.5" fill="none" stroke="#fff" stroke-width="1"/><polyline points="770.5,520.5 770.5,528.5" fill="none" stroke="#fff" stroke-width="1"/><text x="731.5" y="539.2" font-family="Liberation Serif" font-size="12" font-weight="normal" fill="#fff" text-anchor="start" textLength="74.8" lengthAdjust="spacingAndGlyphs">На фасовку №2</text><path d="M1001.5 68.5H1010.5L1014.5 73V82.5L1017.5 88.5H994.5L997.5 82.5V73Z" fill="#00ffff" shape-rendering="auto"/><path d="M994.5 88.5L997.5 82.5V73L1001.5 68.5H1010.5" fill="none" stroke="#000" shape-rendering="auto"/><path d="M1010.5 68.5L1014.5 73V82.5L1017.5 88.5H994.5" fill="none" stroke="#fff" shape-rendering="auto"/><path d="M1005.5 89V91.5L1008 94L1011 90.5V89Z" fill="#00ffff" shape-rendering="auto"/><path d="M1005.5 89V91.5L1008 94" fill="none" stroke="#000" shape-rendering="auto"/><path d="M1008 94L1011 90.5V89" fill="none" stroke="#fff" shape-rendering="auto"/><rect x="614" y="561" width="393" height="166" fill="#383838" /><rect x="610" y="557" width="394" height="166" fill="#f0f0f0" /><rect x="611" y="558" width="393" height="165" fill="#c8c0b8" /><rect x="611" y="558" width="392" height="164" fill="#009999" /><rect x="622.5" y="572.5" width="368" height="14" fill="#ece9d8" stroke="#d2c4bc" /><text x="806.5" y="584" font-family="Liberation Sans" font-size="12" font-weight="normal" fill="#000" text-anchor="middle" >Выключен</text><text x="630" y="608.3" font-family="Liberation Sans" font-size="12" font-weight="bold" fill="#fff" text-anchor="start" >Взять из</text><rect x="638" y="615" width="13" height="13" fill="#ffffff" /><rect x="638" y="615" width="12" height="1" fill="#9a9282" /><rect x="638" y="615" width="1" height="12" fill="#9a9282" /><rect x="639" y="616" width="11" height="1" fill="#6e675a" /><rect x="639" y="616" width="1" height="10" fill="#6e675a" /><rect x="649" y="616" width="1" height="11" fill="#ece8d8" /><rect x="639" y="626" width="11" height="1" fill="#ece8d8" /><rect x="650" y="615" width="1" height="13" fill="#fbfaf4" /><rect x="638" y="627" width="13" height="1" fill="#fbfaf4" /><text x="656" y="625.5" font-family="Liberation Sans" font-size="12" font-weight="normal" fill="#fff" text-anchor="start" textLength="16.5" lengthAdjust="spacingAndGlyphs">411</text><rect x="684" y="615" width="13" height="13" fill="#ffffff" /><rect x="684" y="615" width="12" height="1" fill="#9a9282" /><rect x="684" y="615" width="1" height="12" fill="#9a9282" /><rect x="685" y="616" width="11" height="1" fill="#6e675a" /><rect x="685" y="616" width="1" height="10" fill="#6e675a" /><rect x="695" y="616" width="1" height="11" fill="#ece8d8" /><rect x="685" y="626" width="11" height="1" fill="#ece8d8" /><rect x="696" y="615" width="1" height="13" fill="#fbfaf4" /><rect x="684" y="627" width="13" height="1" fill="#fbfaf4" /><text x="702" y="625.5" font-family="Liberation Sans" font-size="12" font-weight="normal" fill="#fff" text-anchor="start" textLength="16.5" lengthAdjust="spacingAndGlyphs">803</text><rect x="728" y="615" width="13" height="13" fill="#ffffff" /><rect x="728" y="615" width="12" height="1" fill="#9a9282" /><rect x="728" y="615" width="1" height="12" fill="#9a9282" /><rect x="729" y="616" width="11" height="1" fill="#6e675a" /><rect x="729" y="616" width="1" height="10" fill="#6e675a" /><rect x="739" y="616" width="1" height="11" fill="#ece8d8" /><rect x="729" y="626" width="11" height="1" fill="#ece8d8" /><rect x="740" y="615" width="1" height="13" fill="#fbfaf4" /><rect x="728" y="627" width="13" height="1" fill="#fbfaf4" /><text x="746" y="625.5" font-family="Liberation Sans" font-size="12" font-weight="normal" fill="#fff" text-anchor="start" textLength="16.5" lengthAdjust="spacingAndGlyphs">Б24</text><rect x="772" y="615" width="13" height="13" fill="#ffffff" /><rect x="772" y="615" width="12" height="1" fill="#9a9282" /><rect x="772" y="615" width="1" height="12" fill="#9a9282" /><rect x="773" y="616" width="11" height="1" fill="#6e675a" /><rect x="773" y="616" width="1" height="10" fill="#6e675a" /><rect x="783" y="616" width="1" height="11" fill="#ece8d8" /><rect x="773" y="626" width="11" height="1" fill="#ece8d8" /><rect x="784" y="615" width="1" height="13" fill="#fbfaf4" /><rect x="772" y="627" width="13" height="1" fill="#fbfaf4" /><text x="790" y="625.5" font-family="Liberation Sans" font-size="12" font-weight="normal" fill="#fff" text-anchor="start" textLength="16.5" lengthAdjust="spacingAndGlyphs">Б25</text><text x="630" y="653" font-family="Liberation Sans" font-size="12" font-weight="bold" fill="#fff" text-anchor="start" >Принять в</text><circle cx="645" cy="665.5" r="5.6" fill="#fff" stroke="#f4f0e4" shape-rendering="auto"/><path d="M639.8 667.5A5.4 5.4 0 0 1 648.5 660.8" fill="none" stroke="#8a8272" stroke-width="1.3" shape-rendering="auto"/><text x="656" y="670" font-family="Liberation Sans" font-size="12" font-weight="normal" fill="#fff" text-anchor="start" >Б12</text><circle cx="689" cy="665.5" r="5.6" fill="#fff" stroke="#f4f0e4" shape-rendering="auto"/><path d="M683.8 667.5A5.4 5.4 0 0 1 692.5 660.8" fill="none" stroke="#8a8272" stroke-width="1.3" shape-rendering="auto"/><text x="701" y="670" font-family="Liberation Sans" font-size="12" font-weight="normal" fill="#fff" text-anchor="start" >Б11</text><circle cx="733" cy="665.5" r="5.6" fill="#fff" stroke="#f4f0e4" shape-rendering="auto"/><path d="M727.8 667.5A5.4 5.4 0 0 1 736.5 660.8" fill="none" stroke="#8a8272" stroke-width="1.3" shape-rendering="auto"/><text x="745" y="670" font-family="Liberation Sans" font-size="12" font-weight="normal" fill="#fff" text-anchor="start" >Б10</text><circle cx="777" cy="665.5" r="5.6" fill="#fff" stroke="#f4f0e4" shape-rendering="auto"/><path d="M771.8 667.5A5.4 5.4 0 0 1 780.5 660.8" fill="none" stroke="#8a8272" stroke-width="1.3" shape-rendering="auto"/><text x="788" y="670" font-family="Liberation Sans" font-size="12" font-weight="normal" fill="#fff" text-anchor="start" >Б9</text><circle cx="821" cy="665.5" r="5.6" fill="#fff" stroke="#f4f0e4" shape-rendering="auto"/><path d="M815.8 667.5A5.4 5.4 0 0 1 824.5 660.8" fill="none" stroke="#8a8272" stroke-width="1.3" shape-rendering="auto"/><text x="833" y="670" font-family="Liberation Sans" font-size="12" font-weight="normal" fill="#fff" text-anchor="start" >Б8</text><circle cx="865" cy="665.5" r="5.6" fill="#fff" stroke="#f4f0e4" shape-rendering="auto"/><path d="M859.8 667.5A5.4 5.4 0 0 1 868.5 660.8" fill="none" stroke="#8a8272" stroke-width="1.3" shape-rendering="auto"/><text x="877" y="670" font-family="Liberation Sans" font-size="12" font-weight="normal" fill="#fff" text-anchor="start" >Б6</text><circle cx="905" cy="665.5" r="5.6" fill="#fff" stroke="#f4f0e4" shape-rendering="auto"/><path d="M899.8 667.5A5.4 5.4 0 0 1 908.5 660.8" fill="none" stroke="#8a8272" stroke-width="1.3" shape-rendering="auto"/><text x="917" y="670" font-family="Liberation Sans" font-size="12" font-weight="normal" fill="#fff" text-anchor="start" >Б61</text><circle cx="950" cy="665.5" r="5.6" fill="#fff" stroke="#f4f0e4" shape-rendering="auto"/><path d="M944.8 667.5A5.4 5.4 0 0 1 953.5 660.8" fill="none" stroke="#8a8272" stroke-width="1.3" shape-rendering="auto"/><text x="960" y="670" font-family="Liberation Sans" font-size="12" font-weight="normal" fill="#fff" text-anchor="start" >Б62</text><rect x="806" y="683" width="85" height="25" fill="#7c7062" /><rect x="806" y="683" width="84" height="24" fill="#ffffff" /><rect x="807" y="684" width="83" height="23" fill="#c4b8aa" /><rect x="807" y="684" width="82" height="22" fill="#ece9d8" /><text x="848" y="700" font-family="Liberation Sans" font-size="12" font-weight="bold" fill="#000" text-anchor="middle" >Старт</text><rect x="898" y="683" width="85" height="25" fill="#7c7062" /><rect x="898" y="683" width="84" height="24" fill="#ffffff" /><rect x="899" y="684" width="83" height="23" fill="#c4b8aa" /><rect x="899" y="684" width="82" height="22" fill="#ece9d8" /><text x="940" y="700" font-family="Liberation Sans" font-size="12" font-weight="bold" fill="#000" text-anchor="middle" >Стоп</text><g shape-rendering="auto"><pattern id="dots" width="2" height="2" patternUnits="userSpaceOnUse"><rect width="1" height="1" fill="#8090a0"/><rect x="1" y="1" width="1" height="1" fill="#8090a0"/></pattern><rect x="8" y="30" width="32" height="6" fill="url(#dots)"/><rect x="17.5" y="5.5" width="15" height="22.5" fill="#708090" stroke="#000"/><path d="M8 29.5H17.5M32.5 29.5H40" stroke="#000" stroke-width="1.2"/><path d="M24.5 12.5L32 6V29.5L24.5 35.5Z" fill="#d98a3e" stroke="#000"/><path d="M25.3 13V34.5" stroke="#ffe0a0" stroke-width="0.8"/><rect x="26.5" y="20.5" width="2" height="3" fill="#fff" stroke="#206070" stroke-width="0.7"/><path d="M70.5 22L63 34" stroke="#000" stroke-width="3.2"/><path d="M70.5 22L63 34" stroke="#708090" stroke-width="1.4"/><path d="M71.5 11.5H88.5V15L77 25.5H66L65 21.5L71.5 15Z" fill="#708090" stroke="#000" stroke-width="1.2"/><path d="M71.5 11.5H88.5V14H71.5Z" fill="#000"/><path d="M72 13.3H87L88 14.5" stroke="#00ff00" stroke-width="1.1" fill="none"/><path d="M66.5 21.5H76M78.5 21L84 15.5" stroke="#000" stroke-width="0.9"/><path d="M113 26.5L107.5 33.5M115.5 27L110 34" stroke="#606060" stroke-width="1" stroke-dasharray="1.2 0.8"/><path d="M113.5 17.5H126.5V20.5L119 27.5H108L106.5 26V24L113.5 17.5Z" fill="#ebebeb" stroke="#606060"/><path d="M108 24.5H117.5M118.5 23.5L124 18.5" stroke="#606060" stroke-width="1"/><rect x="118.5" y="10.5" width="17" height="5" rx="1.5" fill="#ffffff" stroke="#5a5a5a"/><rect x="119" y="10" width="16" height="1.5" fill="#5a5a5a"/><path d="M121 13.3H133" stroke="#505050" stroke-width="1.2" stroke-dasharray="1 1"/><g transform="translate(1.5,3)" fill="#a8a8a8"><path d="M149.5 17.5H166V21.5H149.5Z M152 21.5H167V24H152Z"/><circle cx="174" cy="19.3" r="6.8"/></g><path d="M150.5 17.5H163L164 15.5L165.5 17.5H167.5V21.5H150.5Q149.3 21.5 149.3 19.5Q149.3 17.5 150.5 17.5Z" fill="#f8f8f8" stroke="#555" stroke-width="1"/><path d="M152 21.5V23.5H154.5V22.5H157V23.5H161V22.5H163V23.5H167V21.5" fill="#f0f0f0" stroke="#555" stroke-width="0.9"/><circle cx="174" cy="19.3" r="6.8" fill="#f2f2f2" stroke="#555" stroke-width="1"/><rect x="174.5" y="17.3" width="3.5" height="3.8" rx="1" fill="#e0e0e0" stroke="#555" stroke-width="0.9"/><rect x="200.5" y="6.5" width="2.5" height="14" fill="#e8e8e8" stroke="#000"/><rect x="198.5" y="9.5" width="6" height="2" fill="#e8e8e8" stroke="#000" stroke-width="0.8"/><rect x="198.5" y="20" width="6.5" height="14.5" rx="3" fill="#b0582a" stroke="#000" stroke-width="1.2"/><path d="M200.8 23V32M202.8 23V32" stroke="#000" stroke-width="0.7"/><rect x="214" y="11" width="2.5" height="10" fill="#e8e8e8" stroke="#000"/><path d="M206.5 6.5H209V8H213L219 6.5L223 11V13.5H221.5L218 10.5L213 12H209V13.5H206.5Z" fill="#e8e8e8" stroke="#000" stroke-width="1.1"/><path d="M213 9.5H217" stroke="#2030ff" stroke-width="1.5"/><rect x="211.5" y="20" width="6.5" height="14.5" rx="3" fill="#b0582a" stroke="#000" stroke-width="1.2"/><path d="M213.8 23V32M215.8 23V32" stroke="#000" stroke-width="0.7"/><path d="M268.5 5.5L281 16.5L261.5 34L249 22.5Z" fill="#f8f8f8" stroke="#606060" stroke-width="1"/><path d="M249.5 22.5L259 13.5M250 23L261.5 33.5" stroke="#707070" stroke-width="2" stroke-dasharray="1 1"/><path d="M259 13.5L268.5 5.5M259.5 13.5L269 23" stroke="#606060" stroke-width="1"/><path d="M255.5 24L261 19M257.5 26L263 21M259.5 28L265 23M261.5 30L266 26M254 21.5L258 18" stroke="#707070" stroke-width="0.9"/><path d="M266.5 20L269 17.5H274L278.5 21.5H280.5V29.5H277.5L276 27.5H269.5L266 24Z" fill="#eeeeee" stroke="#606060" stroke-width="1"/><path d="M279.5 22V29" stroke="#606060" stroke-width="2"/><path d="M262 22.5L267 22.5M268.5 22.5H274" stroke="#606060" stroke-width="1"/><circle cx="269" cy="22" r="1.4" fill="#fff" stroke="#606060" stroke-width="0.8"/><path d="M308.5 7L322.5 33.5H294.5Z" fill="#bdbdbd" stroke="#b0b0b0"/><path d="M308.5 15.5L316.5 30H300.5Z" fill="#fff"/><rect x="307.5" y="19" width="2" height="6.5" fill="#555"/><rect x="307.5" y="27" width="2" height="2" fill="#555"/><path d="M341.5 6V33M337 28.5H368M337 14.5H369M337 21.5H369" stroke="#8c8c8c" stroke-width="1" fill="none"/><path d="M339.5 7L341.5 4.5L343.5 7Z M367 26.5L369.5 28.5L367 30.5Z" fill="#8c8c8c"/><linearGradient id="bar" x1="0" y1="0" x2="0" y2="1"><stop offset="0" stop-color="#8c8c8c"/><stop offset="1" stop-color="#dcdcdc"/></linearGradient><rect x="344" y="22" width="2" height="6" fill="url(#bar)"/><rect x="347" y="16" width="2" height="12" fill="url(#bar)"/><rect x="350" y="13" width="2" height="15" fill="url(#bar)"/><rect x="353" y="11" width="2" height="17" fill="url(#bar)"/><rect x="356" y="17" width="2" height="11" fill="url(#bar)"/><rect x="359" y="19" width="2" height="9" fill="url(#bar)"/><rect x="362" y="18" width="2" height="10" fill="url(#bar)"/><path d="M344 30.5H364" stroke="#d8d8d8" stroke-width="2" stroke-dasharray="1.5 1.5"/><rect x="383.5" y="9.5" width="28" height="22" fill="#f6f6f6" stroke="#9c9c9c"/><linearGradient id="thd" x1="0" y1="0" x2="0" y2="1"><stop offset="0" stop-color="#a0a0a0"/><stop offset="0.5" stop-color="#c4c4c4"/><stop offset="1" stop-color="#909090"/></linearGradient><rect x="384" y="10" width="27" height="8" fill="url(#thd)"/><path d="M386 20.5H389M392 20.5H394M395 20.5H399M402 20.5H404M409 20.5H410M386 23.5H388M392 23.5H394M395 23.5H399M405 23.5H406M409 23.5H410M386 26.5H389M392 26.5H394M395 26.5H399M402 26.5H404M409 26.5H410M386 29.5H389M392 29.5H397M405 29.5H406M409 29.5H410" stroke="#606060" stroke-width="1"/></g><text x="641.5" y="26.6" font-family="Liberation Sans" font-size="19.5" font-weight="normal" fill="#000" text-anchor="start" font-style="italic" textLength="104" lengthAdjust="spacingAndGlyphs" stroke="#000" stroke-width="0.25">Гречезавод</text><text x="924.5" y="26.7" font-family="Liberation Sans" font-size="19.5" font-weight="normal" fill="#000" text-anchor="start" font-style="italic" textLength="75" lengthAdjust="spacingAndGlyphs" stroke="#000" stroke-width="0.25">12:19:25</text><rect x="100" y="43" width="1" height="18" fill="#8c8a84" /><rect x="230" y="43" width="1" height="18" fill="#8c8a84" /><rect x="346" y="43" width="1" height="18" fill="#8c8a84" /><rect x="686" y="43" width="1" height="18" fill="#8c8a84" /><rect x="807" y="43" width="1" height="18" fill="#8c8a84" /><rect x="903" y="43" width="1" height="18" fill="#8c8a84" /><text x="9.9" y="55" font-family="Liberation Sans" font-size="12.5" font-weight="bold" fill="#000" textLength="85.2" lengthAdjust="spacingAndGlyphs">УПРАВЛЕНИЕ</text><text x="109.9" y="55" font-family="Liberation Sans" font-size="12.5" font-weight="bold" fill="#000" textLength="114.45" lengthAdjust="spacingAndGlyphs">Отходы.Отволожка</text><text x="240.65" y="55" font-family="Liberation Sans" font-size="12.5" font-weight="bold" fill="#000" textLength="99.95" lengthAdjust="spacingAndGlyphs">Гречневая крупа</text><text x="355.65" y="55" font-family="Liberation Sans" font-size="12.5" font-weight="bold" fill="#000" textLength="114.95" lengthAdjust="spacingAndGlyphs">Готовая продукция</text><text x="483.9" y="55" font-family="Liberation Sans" font-size="12.5" font-weight="bold" fill="#fff" textLength="84.7" lengthAdjust="spacingAndGlyphs">Микронизатор</text><text x="588.15" y="55" font-family="Liberation Sans" font-size="12.5" font-weight="bold" fill="#000" textLength="92.45" lengthAdjust="spacingAndGlyphs">Пропариватель</text><text x="695.65" y="55" font-family="Liberation Sans" font-size="12.5" font-weight="bold" fill="#000" textLength="108.45" lengthAdjust="spacingAndGlyphs">Цветосепараторы</text><text x="816.9" y="55" font-family="Liberation Sans" font-size="12.5" font-weight="bold" fill="#000" textLength="80.59999999999998" lengthAdjust="spacingAndGlyphs">Подключение</text><rect x="0" y="735" width="1024" height="33" fill="#ece9d8" /><rect x="0" y="735" width="1024" height="1" fill="#9c948c" /><rect x="0" y="736" width="1024" height="1" fill="#ffffff" /><rect x="0" y="736" width="1" height="32" fill="#ffffff" /><rect x="1" y="737" width="169" height="1" fill="#aca899" /><rect x="1" y="737" width="1" height="29" fill="#aca899" /><rect x="170" y="737" width="1" height="30" fill="#ffffff" /><rect x="171" y="737" width="851" height="1" fill="#aca899" /><rect x="171" y="737" width="1" height="29" fill="#aca899" /><rect x="1022" y="737" width="1" height="30" fill="#ffffff" /><rect x="0" y="766" width="1023" height="1" fill="#ffffff" /><rect x="0" y="767" width="1024" height="1" fill="#aca899" /><rect x="1023" y="736" width="1" height="32" fill="#aca899" /></svg></body></html>
